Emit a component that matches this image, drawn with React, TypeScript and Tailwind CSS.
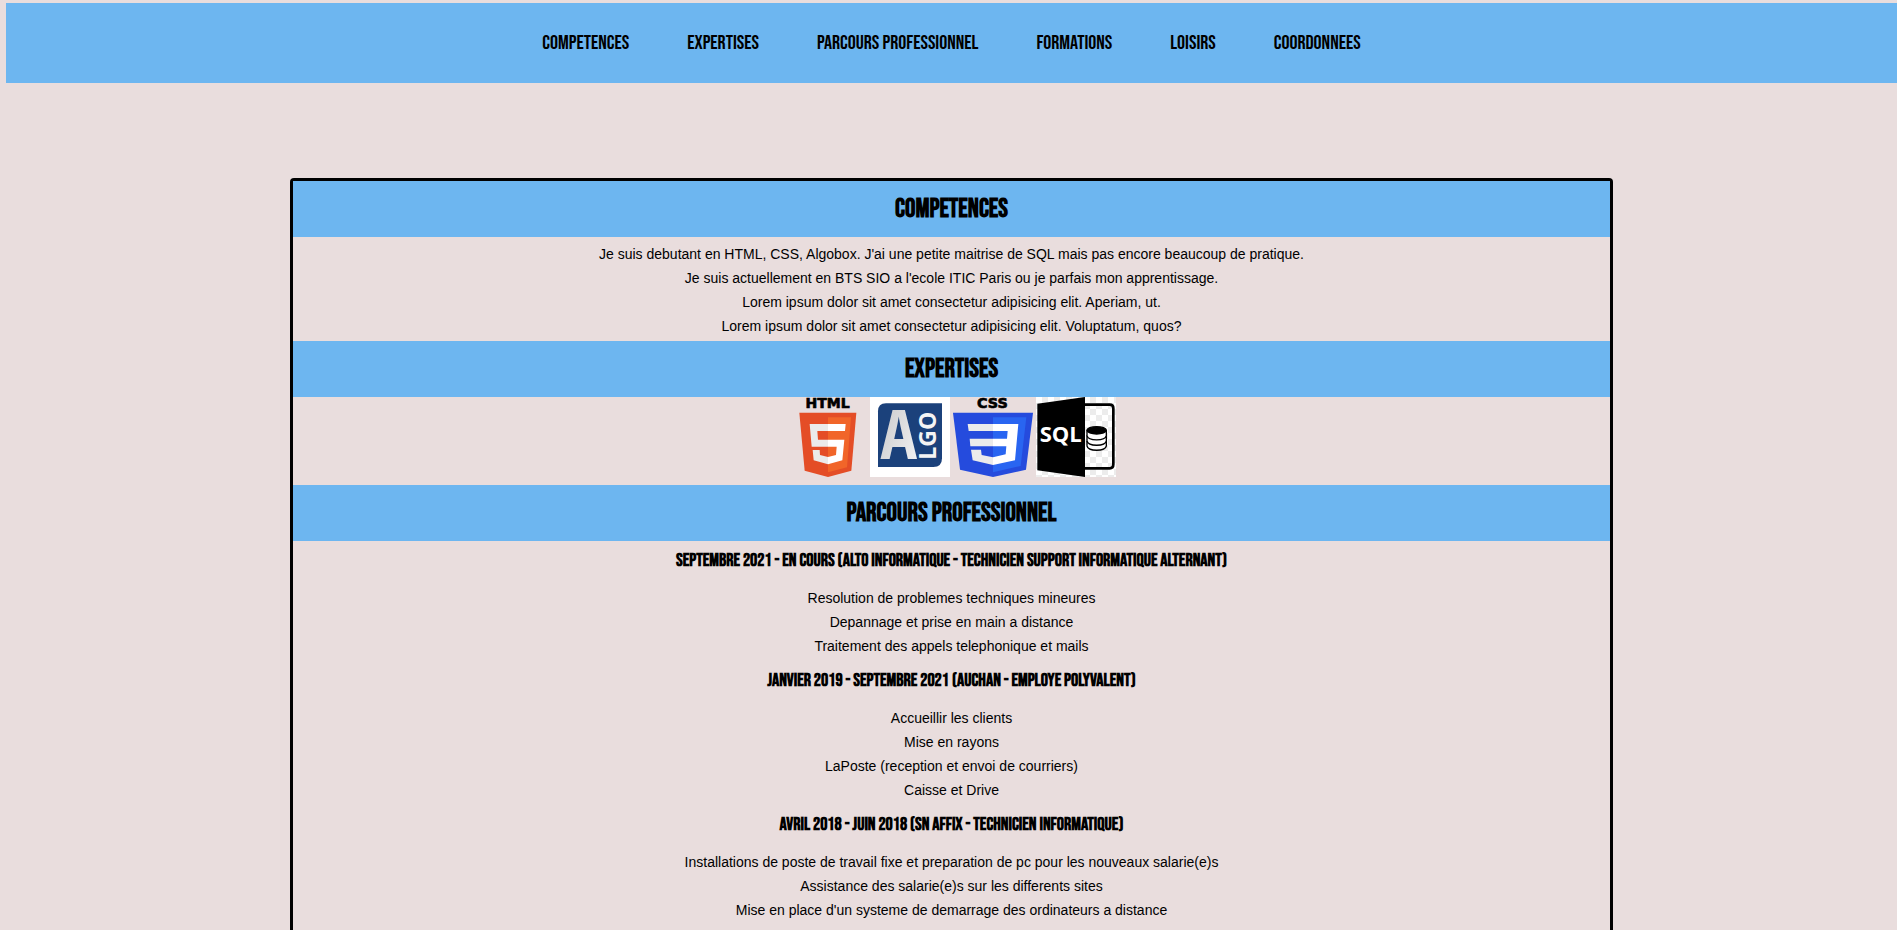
import type { ReactNode } from "react";

const links = [
  { label: "COMPETENCES", href: "#competences" },
  { label: "EXPERTISES", href: "#expertises" },
  { label: "PARCOURS PROFESSIONNEL", href: "#parcours" },
  { label: "FORMATIONS", href: "#formations" },
  { label: "LOISIRS", href: "#loisirs" },
  { label: "COORDONNEES", href: "#coordonnees" },
];

const skills = [
  "Je suis debutant en HTML, CSS, Algobox. J'ai une petite maitrise de SQL mais pas encore beaucoup de pratique.",
  "Je suis actuellement en BTS SIO a l'ecole ITIC Paris ou je parfais mon apprentissage.",
  "Lorem ipsum dolor sit amet consectetur adipisicing elit. Aperiam, ut.",
  "Lorem ipsum dolor sit amet consectetur adipisicing elit. Voluptatum, quos?",
];

const jobs = [
  {
    title: "Septembre 2021 - En cours (Alto Informatique - Technicien Support Informatique Alternant)",
    tasks: [
      "Resolution de problemes techniques mineures",
      "Depannage et prise en main a distance",
      "Traitement des appels telephonique et mails",
    ],
  },
  {
    title: "Janvier 2019 - Septembre 2021 (Auchan - Employe polyvalent)",
    tasks: ["Accueillir les clients", "Mise en rayons", "LaPoste (reception et envoi de courriers)", "Caisse et Drive"],
  },
  {
    title: "Avril 2018 - Juin 2018 (SN Affix - Technicien informatique)",
    tasks: [
      "Installations de poste de travail fixe et preparation de pc pour les nouveaux salarie(e)s",
      "Assistance des salarie(e)s sur les differents sites",
      "Mise en place d'un systeme de demarrage des ordinateurs a distance",
    ],
  },
];

function HtmlLogo() {
  return (
    <svg viewBox="21 6 240 240" className="size-20 overflow-visible">
      <text x="143" y="38" textAnchor="middle" fontFamily="DejaVu Sans" fontWeight="700" fontSize="42" stroke="#000" strokeWidth="2">HTML</text>
      <path fill="#e44d26" d="M58 53H229L214 227L144 246L74 227Z" />
      <path fill="#f16529" d="M144 67H213L201 217L144 232Z" />
      <path fill="#ebebeb" d="M89 87H144V108H112L114 134H144V155H95ZM98 165H119L120 180L144 186V208L101 196Z" />
      <path fill="#fff" d="M144 87H197L195 108H144ZM144 134H193L187 196L144 208V186L168 180L170 155H144Z" />
    </svg>
  );
}

function AlgoLogo() {
  return (
    <svg viewBox="270 6 240 240" className="size-20 overflow-visible">
      <defs>
        <linearGradient id="algo-letter" x1="0" x2="1" y1="0" y2="1">
          <stop offset="0" stopColor="#c4c4c6" />
          <stop offset="1" stopColor="#f6f6f6" />
        </linearGradient>
      </defs>
      <path fill="#fff" d="M270 6H510V246H270Z" />
      <path fill="#1b417b" d="M318 25H486V190Q486 216 460 216H294V49Q294 25 318 25Z" />
      <text x="356" y="192" textAnchor="middle" fontFamily="Open Sans Condensed" fontWeight="700" fontSize="205" fill="url(#algo-letter)">A</text>
      <text transform="translate(469 194) rotate(-90)" fontFamily="Open Sans" fontWeight="700" fontSize="69" fill="#f4f4f4">LGO</text>
    </svg>
  );
}

function CssLogo() {
  return (
    <svg viewBox="9 6 240 240" className="size-20 overflow-visible">
      <text x="127" y="38" textAnchor="middle" fontFamily="DejaVu Sans" fontWeight="700" fontSize="43" stroke="#000" strokeWidth="2">CSS</text>
      <path fill="#254bdd" d="M9 53H249L228 224L129 246L30 224Z" />
      <path fill="#2965f1" d="M129 67H229L212 213L129 232Z" />
      <path fill="#ebebeb" d="M53 87H129V108H56ZM59 131H129V154H61ZM63 164H93L95 180L129 187V210L68 196Z" />
      <path fill="#fff" d="M129 87H205L195 196L129 210V187L167 178L169 154H129V131H171L173 108H129Z" />
    </svg>
  );
}

function SqlLogo() {
  return (
    <svg viewBox="255 6 240 240" className="size-20">
      <defs>
        <pattern id="checker" x="255" y="6" width="36" height="36" patternUnits="userSpaceOnUse">
          <path fill="#fff" d="M0 0H36V36H0Z" />
          <path fill="#ececec" d="M18 0H36V18H18ZM0 18H18V36H0Z" />
        </pattern>
      </defs>
      <path fill="url(#checker)" d="M255 6H495V246H255Z" />
      <path fill="none" stroke="#000" strokeWidth="8" d="M400 29H476Q487 29 487 40V208Q487 220 476 220H400" />
      <path d="M259 26L402 6V246L259 226Z" />
      <text x="329" y="142" textAnchor="middle" fontFamily="Open Sans" fontWeight="700" fontSize="66" fill="#fff">SQL</text>
      <g fill="#fff" stroke="#000" strokeWidth="4">
        <path d="M408 140V153C412 170 462 170 466 153V140Z" />
        <path d="M408 123V138C412 155 462 155 466 138V123Z" />
        <path d="M408 106V122C412 139 462 139 466 122V106Z" />
        <ellipse fill="#000" cx="437" cy="106" rx="29" ry="11" />
      </g>
    </svg>
  );
}

function Section({ id, title, children }: { id: string; title: string; children: ReactNode }) {
  return (
    <section id={id}>
      <h2 className="bg-[#6db6f0] pt-[3px] pb-px text-center font-['Bebas_Neue',sans-serif] text-[26px] leading-[52px] font-bold">{title}</h2>
      {children}
    </section>
  );
}

function Lines({ items }: { items: string[] }) {
  return (
    <ul className="pt-[5px] pb-[3px] text-center text-[14px] leading-6">
      {items.map((item) => (
        <li key={item}>{item}</li>
      ))}
    </ul>
  );
}

export default function App() {
  return (
    <div className="flex min-h-screen flex-col bg-[#e9dddd] pt-[3px] pl-1.5 font-['Liberation_Sans',Arial,sans-serif] text-black">
      <nav className="flex h-20 items-center justify-center gap-[58px] bg-[#6db6f0] font-['Bebas_Neue',sans-serif] text-[20px]">
        {links.map((link) => (
          <a key={link.href} href={link.href}>
            {link.label}
          </a>
        ))}
      </nav>
      <main className="mx-auto mt-[95px] w-[70%] flex-1 rounded-t border-3 border-b-0 border-black">
        <Section id="competences" title="COMPETENCES">
          <Lines items={skills} />
        </Section>
        <Section id="expertises" title="EXPERTISES">
          <div className="flex justify-center gap-[3px] pb-2">
            <HtmlLogo />
            <AlgoLogo />
            <CssLogo />
            <SqlLogo />
          </div>
        </Section>
        <Section id="parcours" title="PARCOURS PROFESSIONNEL">
          {jobs.map((job) => (
            <article key={job.title}>
              <h3 className="text-center font-['Bebas_Neue',sans-serif] text-[18px] leading-10 font-bold">{job.title}</h3>
              <Lines items={job.tasks} />
            </article>
          ))}
        </Section>
      </main>
    </div>
  );
}
